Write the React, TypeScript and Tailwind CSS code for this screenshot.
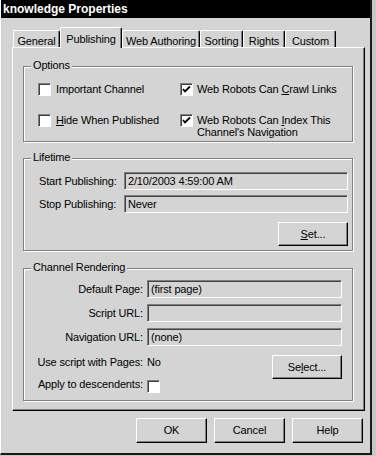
import type { ReactNode } from "react";

const font = { fontFamily: '"Liberation Sans", Arial, sans-serif' };

function Check({ checked = false }: { checked?: boolean }) {
  return (
    <div className="h-[13px] w-[13px] shrink-0 border border-t-[#808080] border-l-[#808080] border-b-white border-r-white bg-white shadow-[inset_1px_1px_0_#404040]">
      {checked && (
        <svg width="11" height="11" viewBox="0 0 11 11" className="block">
          <polyline points="2,5 4,7.5 9,2.5" fill="none" stroke="#000" strokeWidth="1.8" />
        </svg>
      )}
    </div>
  );
}

function Field({ value, className }: { value?: string; className: string }) {
  return (
    <div
      className={
        "h-[18px] border border-t-[#808080] border-l-[#808080] border-b-white border-r-white pl-[3px] leading-[16px] shadow-[inset_1px_1px_0_#404040] " +
        className
      }
    >
      {value}
    </div>
  );
}

function Btn({ children, className }: { children: ReactNode; className: string }) {
  return (
    <div
      className={
        "flex items-center justify-center border border-t-white border-l-white border-b-black border-r-black shadow-[inset_-1px_-1px_0_#808080] " +
        className
      }
    >
      {children}
    </div>
  );
}

function Group({ title, className, children }: { title: string; className: string; children: ReactNode }) {
  return (
    <div className={"ml-[10px] w-[330px] border border-[#808080] shadow-[1px_1px_0_#fff,inset_1px_1px_0_#fff] " + className}>
      <div className="-mt-[8px] ml-[7px] w-fit bg-[#d4d4d4] px-[2px] leading-[13px]">{title}</div>
      {children}
    </div>
  );
}

// right-aligned label that may run past its column to the left
function Label({ children }: { children: ReactNode }) {
  return (
    <div className="flex w-[104px] shrink-0 justify-end whitespace-nowrap">
      <span>{children}</span>
    </div>
  );
}

const tabs = [
  { label: "General", w: "w-[47px]" },
  { label: "Publishing", w: "w-[62px]", active: true },
  { label: "Web Authoring", w: "w-[78px]" },
  { label: "Sorting", w: "w-[43px]" },
  { label: "Rights", w: "w-[42px]" },
  { label: "Custom", w: "w-[51px]" },
];

export default function App() {
  return (
    <div className="h-[456px] w-[376px] bg-[#c8c8c8] text-[11px] tracking-[-0.15px] text-black" style={font}>
      <div className="h-[455px] w-[372px] border-b-2 border-r-2 border-l border-b-[#1a1a1a] border-r-[#1a1a1a] border-l-white bg-[#d4d4d4]">
        {/* Title bar */}
        <div className="flex h-[18px] items-center bg-black pl-[2px] text-[12px] font-bold tracking-normal text-white">
          knowledge Properties
        </div>

        {/* Tabs */}
        <div className="mt-[10px] ml-[12px] flex h-[19px] items-end">
          {tabs.map((t) =>
            t.active ? (
              <div
                key={t.label}
                className={`relative z-10 -mb-[1px] flex h-[21px] items-start justify-center rounded-t-[2px] border-l border-t border-r border-l-white border-t-white border-r-black bg-[#d4d4d4] pt-[3px] shadow-[inset_-1px_0_0_#808080] ${t.w}`}
              >
                {t.label}
              </div>
            ) : (
              <div
                key={t.label}
                className={`flex h-[17px] items-start justify-center rounded-t-[2px] border-l border-t border-r border-l-white border-t-white border-r-black pt-[2px] shadow-[inset_-1px_0_0_#808080] ${t.w}`}
              >
                {t.label}
              </div>
            )
          )}
        </div>

        {/* Tab panel */}
        <div className="ml-[11px] h-[364px] w-[353px] border-t border-l border-r border-b border-t-white border-l-white border-r-black border-b-black shadow-[inset_-1px_-1px_0_#808080]">
          <Group title="Options" className="mt-[18px] h-[76px]">
            <div className="mt-[11px] grid grid-cols-[142px_1fr] gap-y-[18px] pl-[14px] leading-[13px]">
              <div className="flex items-start gap-[5px]">
                <Check />
                <span>Important Channel</span>
              </div>
              <div className="flex items-start gap-[4px]">
                <Check checked />
                <span>
                  Web Robots Can <u className="underline-offset-1">C</u>rawl Links
                </span>
              </div>
              <div className="flex items-start gap-[5px]">
                <Check />
                <span>
                  <u className="underline-offset-1">H</u>ide When Published
                </span>
              </div>
              <div className="flex items-start gap-[4px]">
                <Check checked />
                <span className="leading-[12px]">
                  Web Robots Can <u className="underline-offset-1">I</u>ndex This
                  <br />
                  Channel's Navigation
                </span>
              </div>
            </div>
          </Group>

          <Group title="Lifetime" className="mt-[16px] h-[93px]">
            <div className="mt-[8px] grid grid-cols-[85px_224px] items-center gap-y-[5px] pl-[15px]">
              <span>Start Publishing:</span>
              <Field value="2/10/2003 4:59:00 AM" className="w-[224px]" />
              <span>Stop Publishing:</span>
              <Field value="Never" className="w-[224px]" />
            </div>
            <div className="mt-[9px] flex justify-end pr-[4px]">
              <Btn className="h-[24px] w-[70px]">
                <span>
                  <u className="underline-offset-1">S</u>et...
                </span>
              </Btn>
            </div>
          </Group>

          <Group title="Channel Rendering" className="mt-[17px] h-[133px]">
            <div className="mt-[6px] flex flex-col gap-[6px] pl-[15px]">
              <div className="flex items-center gap-[4px]">
                <Label>Default Page:</Label>
                <Field value="(first page)" className="w-[195px]" />
              </div>
              <div className="flex items-center gap-[4px]">
                <Label>Script URL:</Label>
                <Field className="w-[195px]" />
              </div>
              <div className="flex items-center gap-[4px]">
                <Label>Navigation URL:</Label>
                <Field value="(none)" className="w-[195px]" />
              </div>
            </div>
            <div className="flex pl-[15px] pr-[10px]">
              <div className="flex flex-col leading-[13px]">
                <div className="mt-[10px] flex gap-[4px]">
                  <Label>Use script with Pages:</Label>
                  <span>No</span>
                </div>
                <div className="mt-[9px] flex items-start gap-[4px]">
                  <Label>Apply to descendents:</Label>
                  <div className="mt-[2px]">
                    <Check />
                  </div>
                </div>
              </div>
              <Btn className="ml-auto mt-[9px] h-[24px] w-[70px]">
                <span>
                  Se<u className="underline-offset-1">l</u>ect...
                </span>
              </Btn>
            </div>
          </Group>
        </div>

        {/* Dialog buttons */}
        <div className="mt-[7px] flex justify-end gap-[7px] pr-[7px]">
          <Btn className="h-[25px] w-[71px]">OK</Btn>
          <Btn className="h-[25px] w-[71px]">Cancel</Btn>
          <Btn className="h-[25px] w-[71px]">Help</Btn>
        </div>
      </div>
    </div>
  );
}
